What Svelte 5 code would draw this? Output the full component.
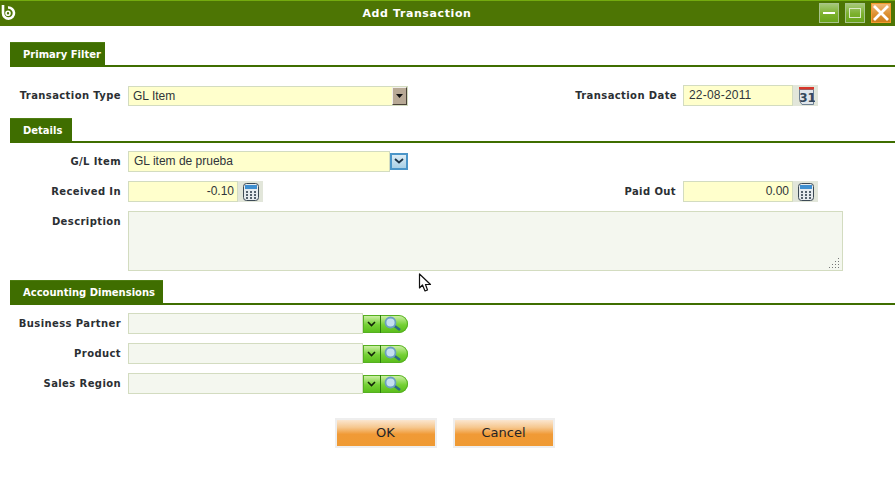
<script lang="ts">
  const lookups = ['Business Partner', 'Product', 'Sales Region'];
</script>

{#snippet calc()}
  <span class="addon">
    <svg width="16" height="18" viewBox="0 0 16 18">
      <rect x="0.5" y="0.5" width="15" height="17" rx="3" fill="#e6ebee" stroke="#3d4a55" />
      <rect x="2" y="2" width="12" height="4" fill="#3f8fd0" />
      <g fill="#55626d">
        <rect x="3" y="8" width="2" height="2" /><rect x="7" y="8" width="2" height="2" /><rect x="11" y="8" width="2" height="2" />
        <rect x="3" y="11" width="2" height="2" /><rect x="7" y="11" width="2" height="2" /><rect x="11" y="11" width="2" height="2" />
        <rect x="3" y="14" width="2" height="2" /><rect x="7" y="14" width="2" height="2" /><rect x="11" y="14" width="2" height="2" />
      </g>
    </svg>
  </span>
{/snippet}

<div class="window">
  <header class="titlebar">
    <svg class="logo" width="16" height="18" viewBox="0 0 16 18">
      <path d="M3 1 V9 A5.5 5.5 0 1 0 8 3.6" fill="none" stroke="#fff" stroke-width="2.6" />
      <circle cx="8" cy="9.2" r="2" fill="none" stroke="#fff" stroke-width="1.6" />
    </svg>
    <h1>Add Transaction</h1>
    <div class="controls">
      <span class="ctl"><i class="min"></i></span>
      <span class="ctl"><i class="max"></i></span>
      <span class="ctl close">
        <svg width="18" height="18" viewBox="0 0 18 18"><path d="M2 2 L16 16 M16 2 L2 16" stroke="#fff" stroke-width="2.8" /></svg>
      </span>
    </div>
  </header>

  <section class="section first">
    <div class="head"><span class="tab wide">Primary Filter</span></div>
    <div class="row top">
      <label class="label" for="type">Transaction Type</label>
      <div class="select-wrap">
        <div id="type" class="field yellow type">GL Item</div>
        <span class="drop">
          <svg width="7" height="4" viewBox="0 0 7 4"><path d="M0 0H7L3.5 4Z" fill="#111" /></svg>
        </span>
      </div>
      <span class="label right">Transaction Date</span>
      <div class="field yellow short date">22-08-2011</div>
      <span class="addon">
        <svg width="18" height="18" viewBox="0 0 18 18">
          <path d="M2.5 2.5 H16.5 V17.5 H5 Q2.5 15 2.5 12 Z" fill="#dfe5ea" stroke="#6d8093" />
          <rect x="2" y="0" width="15" height="2.5" fill="#d8362a" />
          <text x="10.5" y="15" class="day">31</text>
        </svg>
      </span>
    </div>
  </section>

  <section class="section second">
    <div class="head"><span class="tab">Details</span></div>
    <div class="rows">
      <div class="row">
        <span class="label">G/L Item</span>
        <div class="field yellow gl">GL item de prueba</div>
        <span class="blue">
          <svg width="10" height="6" viewBox="0 0 10 6"><path d="M1 1 L5 4.5 L9 1" fill="none" stroke="#1d3346" stroke-width="1.8" /></svg>
        </span>
      </div>
      <div class="row">
        <span class="label">Received In</span>
        <div class="field yellow short num">-0.10</div>
        {@render calc()}
        <span class="label right paid">Paid Out</span>
        <div class="field yellow short num">0.00</div>
        {@render calc()}
      </div>
      <div class="row desc">
        <span class="label">Description</span>
        <div class="field area">
          <svg class="grip" width="11" height="11" viewBox="0 0 11 11" fill="#777">
            <rect x="9" y="0" width="1" height="1" />
            <rect x="6" y="3" width="1" height="1" /><rect x="9" y="3" width="1" height="1" />
            <rect x="3" y="6" width="1" height="1" /><rect x="6" y="6" width="1" height="1" /><rect x="9" y="6" width="1" height="1" />
            <rect x="0" y="9" width="1" height="1" /><rect x="3" y="9" width="1" height="1" /><rect x="6" y="9" width="1" height="1" /><rect x="9" y="9" width="1" height="1" />
          </svg>
        </div>
      </div>
    </div>
  </section>

  <section class="section third">
    <div class="head"><span class="tab dims">Accounting Dimensions</span></div>
    <div class="rows">
      {#each lookups as name}
        <div class="row">
          <span class="label">{name}</span>
          <div class="field look"></div>
          <span class="lookup">
            <span class="chev">
              <svg width="9" height="6" viewBox="0 0 9 6"><path d="M1 1 L4.5 4.5 L8 1" fill="none" stroke="#14240a" stroke-width="1.6" /></svg>
            </span>
            <span class="glass">
              <svg width="19" height="16" viewBox="0 0 19 16">
                <line x1="11" y1="9.5" x2="17" y2="14" stroke="#2c6a86" stroke-width="2.6" />
                <circle cx="7.5" cy="6.5" r="5" fill="#c4dff0" stroke="#6c9fc2" stroke-width="1.8" />
              </svg>
            </span>
          </span>
        </div>
      {/each}
    </div>
  </section>

  <div class="actions">
    <button type="button">OK</button>
    <button type="button">Cancel</button>
  </div>

  <svg class="cursor" width="14" height="21" viewBox="0 0 14 21">
    <path d="M1.5 1 V15 L4.5 12 L7 18 L9.5 17 L7.5 11.5 L12.5 11.5 Z" fill="#fff" stroke="#111" stroke-width="1.2" stroke-linejoin="round" />
  </svg>
</div>

<style>
  :global(body) {
    margin: 0;
    background: #fff;
  }
  .window {
    position: relative;
    width: 895px;
    height: 490px;
    overflow: hidden;
    font-family: "DejaVu Sans", sans-serif;
    color: #2b2f33;
  }
  .titlebar {
    position: relative;
    display: flex;
    align-items: center;
    justify-content: center;
    height: 25px;
    background: #4d7504;
    border-top: 1px solid #74ab0f;
  }
  .logo {
    position: absolute;
    left: 0;
    top: 3px;
  }
  h1 {
    margin: 0 0 0 -61px;
    color: #fff;
    font-size: 11px;
    font-weight: bold;
    letter-spacing: 0.6px;
  }
  .controls {
    position: absolute;
    right: 4px;
    top: 2px;
    display: flex;
    gap: 6px;
  }
  .ctl {
    display: flex;
    align-items: center;
    justify-content: center;
    box-sizing: border-box;
    width: 20px;
    height: 20px;
    background: linear-gradient(#a5c878, #7cb02c 55%, #69a51b);
    border: 1px solid #a8c48c;
  }
  .ctl .min {
    width: 12px;
    height: 2px;
    background: #fff;
  }
  .ctl .max {
    box-sizing: border-box;
    width: 12px;
    height: 10px;
    border: 1px solid #dbe9c6;
  }
  .ctl.close {
    background: linear-gradient(#f0b878, #db8d2c 60%, #cf7f1c);
    border-color: #f59a2e;
  }
  .section {
    padding-left: 10px;
  }
  .section.first {
    margin-top: 16px;
  }
  .section.second {
    margin-top: 12px;
  }
  .section.third {
    margin-top: 9px;
  }
  .head {
    height: 23px;
    border-bottom: 2px solid #3f6e00;
  }
  .tab {
    display: inline-block;
    box-sizing: border-box;
    width: 62px;
    height: 23px;
    padding-left: 13px;
    color: #fff;
    font-size: 10px;
    font-weight: bold;
    line-height: 23px;
    background: #3f6e00;
    border-top: 1px solid #4e7d12;
  }
  .tab.wide {
    width: 95px;
  }
  .tab.dims {
    width: 153px;
  }
  .rows {
    display: flex;
    flex-direction: column;
    gap: 9px;
    margin-top: 8px;
  }
  .row {
    display: flex;
    align-items: center;
    height: 21px;
  }
  .row.top {
    margin-top: 18px;
  }
  .row.desc {
    align-items: flex-start;
    height: 60px;
  }
  .label {
    flex: none;
    box-sizing: border-box;
    width: 118px;
    padding-right: 7px;
    color: #2b2f33;
    font-size: 10px;
    font-weight: bold;
    letter-spacing: 0.4px;
    text-align: right;
    white-space: nowrap;
  }
  .row.desc .label {
    line-height: 21px;
  }
  .label.right {
    width: 275px;
    padding-right: 6px;
  }
  .label.paid {
    width: 420px;
    padding-right: 7px;
  }
  .field {
    box-sizing: border-box;
    height: 21px;
    padding: 0 5px;
    font-family: "Liberation Sans", Arial, sans-serif;
    font-size: 12px;
    line-height: 19px;
    color: #30353a;
    border: 1px solid #d3dcc0;
  }
  .yellow {
    background: #ffffcc;
  }
  .select-wrap {
    position: relative;
    display: flex;
    width: 280px;
  }
  .type {
    width: 280px;
    height: 20px;
    padding-left: 4px;
    line-height: 18px;
  }
  .drop {
    position: absolute;
    right: 1px;
    top: 1px;
    display: flex;
    align-items: center;
    justify-content: center;
    box-sizing: border-box;
    width: 15px;
    height: 18px;
    background: #b8a996;
    border: 1px solid;
    border-color: #f2efe9 #4a4238 #4a4238 #f2efe9;
  }
  .short {
    width: 110px;
  }
  .date {
    letter-spacing: 0.2px;
  }
  .num {
    text-align: right;
    padding-right: 3px;
  }
  .gl {
    width: 262px;
  }
  .addon {
    display: flex;
    align-items: center;
    justify-content: center;
    box-sizing: border-box;
    width: 25px;
    height: 21px;
    background: #e2e6da;
  }
  .day {
    font-family: "DejaVu Sans", sans-serif;
    font-size: 12px;
    font-weight: bold;
    fill: #33475a;
    text-anchor: middle;
  }
  .blue {
    display: flex;
    align-items: center;
    justify-content: center;
    box-sizing: border-box;
    width: 18px;
    height: 17px;
    margin-top: -1px;
    background: linear-gradient(#dcecf5, #a9d0e6);
    border: 2px solid #4b95c8;
  }
  .area {
    position: relative;
    width: 715px;
    height: 60px;
    background: #f4f7ef;
  }
  .grip {
    position: absolute;
    right: 2px;
    bottom: 1px;
  }
  .look {
    width: 235px;
    background: #f4f7ef;
  }
  .lookup {
    display: flex;
    align-items: stretch;
    height: 18px;
    overflow: hidden;
    border-radius: 0 9px 9px 0;
    background: linear-gradient(#d5f2b0, #74d034 55%, #58bb1a);
    box-shadow: inset 0 0 0 1px #55b021;
  }
  .chev {
    display: flex;
    align-items: center;
    justify-content: center;
    width: 17px;
    border-right: 1px solid #2f7d0c;
  }
  .glass {
    display: flex;
    align-items: center;
    width: 27px;
    padding-left: 2px;
    box-sizing: border-box;
  }
  .actions {
    display: flex;
    justify-content: center;
    gap: 16px;
    margin-top: 24px;
    padding-right: 6px;
  }
  button {
    box-sizing: border-box;
    width: 102px;
    height: 30px;
    padding: 0 0 1px;
    font-family: "DejaVu Sans", sans-serif;
    font-size: 13px;
    color: #1f2326;
    background: linear-gradient(#fbe6cf 0, #f6c890 28%, #f09a36 55%, #ef9a33 100%);
    border: 2px solid #eeeeee;
  }
  .cursor {
    position: absolute;
    left: 418px;
    top: 273px;
  }
</style>
